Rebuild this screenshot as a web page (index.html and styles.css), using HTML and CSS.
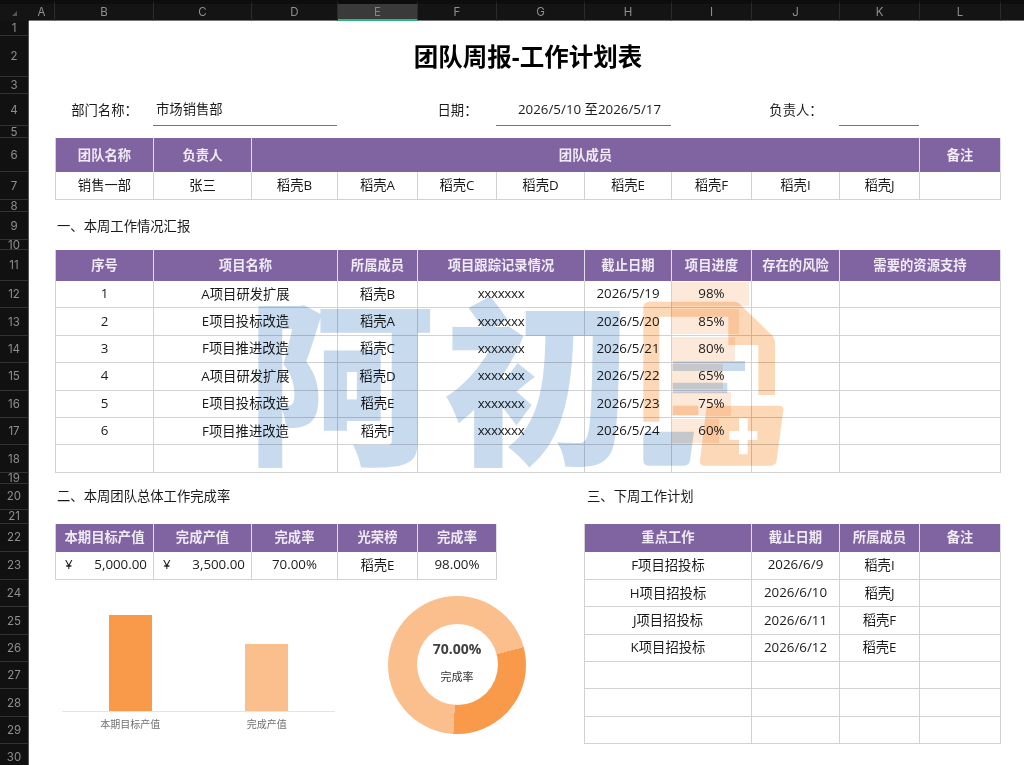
FILE: index.html
```html
<!DOCTYPE html>
<html lang="zh-CN">
<head>
  <meta charset="UTF-8" />
  <title>团队周报-工作计划表</title>
  <link rel="stylesheet" href="styles.css" />
</head>
<body>

<div class="sheet">

  <!-- column letters -->
  <div class="ch corner"><span class="corner-mark"></span></div>
  <div class="ch">A</div><div class="ch">B</div><div class="ch">C</div><div class="ch">D</div>
  <div class="ch active">E</div><div class="ch">F</div><div class="ch">G</div><div class="ch">H</div>
  <div class="ch">I</div><div class="ch">J</div><div class="ch">K</div><div class="ch">L</div><div class="ch"></div>

  <div class="rh">1</div>

  <div class="rh">2</div>
  <div class="title col-b span-11">团队周报-工作计划表</div>

  <div class="rh">3</div>

  <div class="rh">4</div>
  <div class="label col-b">部门名称：</div>
  <div class="field span-2">市场销售部</div>
  <div class="label col-f">日期：</div>
  <div class="field field-date span-2">2026/5/10 至2026/5/17</div>
  <div class="label col-j">负责人：</div>
  <div class="field"></div>

  <div class="rh">5</div>

  <div class="rh">6</div>
  <div class="th col-b first">团队名称</div>
  <div class="th">负责人</div>
  <div class="th span-8">团队成员</div>
  <div class="th">备注</div>

  <div class="rh">7</div>
  <div class="td col-b first">销售一部</div>
  <div class="td">张三</div>
  <div class="td">稻壳B</div>
  <div class="td">稻壳A</div>
  <div class="td">稻壳C</div>
  <div class="td">稻壳D</div>
  <div class="td">稻壳E</div>
  <div class="td">稻壳F</div>
  <div class="td">稻壳I</div>
  <div class="td">稻壳J</div>
  <div class="td"></div>

  <div class="rh">8</div>

  <div class="rh">9</div>
  <div class="section col-b span-4">一、本周工作情况汇报</div>

  <div class="rh">10</div>

  <div class="rh">11</div>
  <div class="th col-b first">序号</div>
  <div class="th span-2">项目名称</div>
  <div class="th">所属成员</div>
  <div class="th span-2">项目跟踪记录情况</div>
  <div class="th">截止日期</div>
  <div class="th">项目进度</div>
  <div class="th">存在的风险</div>
  <div class="th span-2">需要的资源支持</div>

  <div class="rh">12</div>
  <div class="td col-b first">1</div>
  <div class="td span-2">A项目研发扩展</div>
  <div class="td">稻壳B</div>
  <div class="td span-2 mask">xxxxxxx</div>
  <div class="td">2026/5/19</div>
  <div class="td progress"><div class="progress-bar" style="width: 98%"></div><span>98%</span></div>
  <div class="td"></div>
  <div class="td span-2"></div>

  <div class="rh">13</div>
  <div class="td col-b first">2</div>
  <div class="td span-2">E项目投标改造</div>
  <div class="td">稻壳A</div>
  <div class="td span-2 mask">xxxxxxx</div>
  <div class="td">2026/5/20</div>
  <div class="td progress"><div class="progress-bar" style="width: 85%"></div><span>85%</span></div>
  <div class="td"></div>
  <div class="td span-2"></div>

  <div class="rh">14</div>
  <div class="td col-b first">3</div>
  <div class="td span-2">F项目推进改造</div>
  <div class="td">稻壳C</div>
  <div class="td span-2 mask">xxxxxxx</div>
  <div class="td">2026/5/21</div>
  <div class="td progress"><div class="progress-bar" style="width: 80%"></div><span>80%</span></div>
  <div class="td"></div>
  <div class="td span-2"></div>

  <div class="rh">15</div>
  <div class="td col-b first">4</div>
  <div class="td span-2">A项目研发扩展</div>
  <div class="td">稻壳D</div>
  <div class="td span-2 mask">xxxxxxx</div>
  <div class="td">2026/5/22</div>
  <div class="td progress"><div class="progress-bar" style="width: 65%"></div><span>65%</span></div>
  <div class="td"></div>
  <div class="td span-2"></div>

  <div class="rh">16</div>
  <div class="td col-b first">5</div>
  <div class="td span-2">E项目投标改造</div>
  <div class="td">稻壳E</div>
  <div class="td span-2 mask">xxxxxxx</div>
  <div class="td">2026/5/23</div>
  <div class="td progress"><div class="progress-bar" style="width: 75%"></div><span>75%</span></div>
  <div class="td"></div>
  <div class="td span-2"></div>

  <div class="rh">17</div>
  <div class="td col-b first">6</div>
  <div class="td span-2">F项目推进改造</div>
  <div class="td">稻壳F</div>
  <div class="td span-2 mask">xxxxxxx</div>
  <div class="td">2026/5/24</div>
  <div class="td progress"><div class="progress-bar" style="width: 60%"></div><span>60%</span></div>
  <div class="td"></div>
  <div class="td span-2"></div>

  <div class="rh">18</div>
  <div class="td col-b first"></div>
  <div class="td span-2"></div>
  <div class="td"></div>
  <div class="td span-2"></div>
  <div class="td"></div>
  <div class="td"></div>
  <div class="td"></div>
  <div class="td span-2"></div>

  <div class="rh">19</div>

  <div class="rh">20</div>
  <div class="section col-b span-4">二、本周团队总体工作完成率</div>
  <div class="section col-h span-4">三、下周工作计划</div>

  <div class="rh">21</div>

  <div class="rh">22</div>
  <div class="th col-b first">本期目标产值</div>
  <div class="th">完成产值</div>
  <div class="th">完成率</div>
  <div class="th">光荣榜</div>
  <div class="th">完成率</div>
  <div class="th col-h first span-2">重点工作</div>
  <div class="th">截止日期</div>
  <div class="th">所属成员</div>
  <div class="th">备注</div>

  <div class="rh">23</div>
  <div class="td money col-b first"><span>¥</span><span>5,000.00</span></div>
  <div class="td money"><span>¥</span><span>3,500.00</span></div>
  <div class="td">70.00%</div>
  <div class="td">稻壳E</div>
  <div class="td">98.00%</div>
  <div class="td col-h first span-2">F项目招投标</div>
  <div class="td">2026/6/9</div>
  <div class="td">稻壳I</div>
  <div class="td"></div>

  <div class="rh">24</div>
  <div class="td col-h first span-2">H项目招投标</div>
  <div class="td">2026/6/10</div>
  <div class="td">稻壳J</div>
  <div class="td"></div>

  <div class="rh">25</div>
  <div class="td col-h first span-2">J项目招投标</div>
  <div class="td">2026/6/11</div>
  <div class="td">稻壳F</div>
  <div class="td"></div>

  <div class="rh">26</div>
  <div class="td col-h first span-2">K项目招投标</div>
  <div class="td">2026/6/12</div>
  <div class="td">稻壳E</div>
  <div class="td"></div>

  <div class="rh">27</div>
  <div class="td col-h first span-2"></div>
  <div class="td"></div>
  <div class="td"></div>
  <div class="td"></div>

  <div class="rh">28</div>
  <div class="td col-h first span-2"></div>
  <div class="td"></div>
  <div class="td"></div>
  <div class="td"></div>

  <div class="rh">29</div>
  <div class="td col-h first span-2"></div>
  <div class="td"></div>
  <div class="td"></div>
  <div class="td"></div>

  <div class="rh">30</div>

  <!-- charts -->
  <div class="bar-chart">
    <div class="bar-plot">
      <div class="bar-slot"><div class="bar bar-target" style="height: 100%"></div></div>
      <div class="bar-slot"><div class="bar bar-done" style="height: 70%"></div></div>
    </div>
    <div class="bar-labels">
      <div class="bar-label">本期目标产值</div>
      <div class="bar-label">完成产值</div>
    </div>
  </div>

  <div class="donut-wrap">
    <div class="donut">
      <div class="donut-hole">
        <div class="donut-value">70.00%</div>
        <div class="donut-name">完成率</div>
      </div>
    </div>
  </div>

  <!-- watermark -->
  <div class="watermark">
    <div class="wm-text">阿初</div>
    <svg class="wm-logo" viewBox="0 0 540 600" width="180" height="200">
      <path class="wm-orange" d="M70 440V98Q70 80 88 80H345Q353 80 360 88L455 180Q465 190 465 205V360H415V210H325V125H118V440Z" />
      <path class="wm-orange" d="M158 392H235V420H158Z" />
      <path class="wm-orange" fill-rule="evenodd" d="M276 392H478Q492 392 490 406L470 556Q468 572 452 572H254Q238 572 240 556L258 408Q260 392 276 392ZM357 430V468H328V495H357V538H383V495H412V468H383V430Z" />
      <path class="wm-blue" d="M158 258H375V288H158ZM158 323H322V355H158Z" />
      <path class="wm-blue" d="M70 486Q70 470 86 470H222L210 556Q208 572 192 572H86Q70 572 70 556Z" />
    </svg>
  </div>

</div>

</body>
</html>
```

FILE: styles.css
```css
* {
  box-sizing: border-box;
  margin: 0;
  padding: 0;
}

html, body {
  width: 1024px;
  height: 765px;
  overflow: hidden;
  background: #111111;
}

.sheet {
  position: relative;
  display: grid;
  width: 1024px;
  height: 765px;
  overflow: hidden;
  grid-template-columns: 29px 26px 99px 98px 86px 80px 79px 88px 87px 80px 88px 80px 81px 24px;
  grid-template-rows:
    21px 15px 41px 17px 32px 12px 34px 28px 12px 28px 10px 31px
    repeat(7, 27.4px) 11.2px 26px 14px 28px 28px
    repeat(7, 27.4px);
  grid-auto-rows: 27.4px;
  background: #ffffff;
  color: #1a1a1a;
  font-family: "Open Sans", "Noto Sans CJK SC", sans-serif;
  font-size: 13.33px;
}

/* headers */
.ch {
  display: flex;
  align-items: center;
  justify-content: center;
  border-top: 4px solid #0d0d0d;
  border-right: 1px solid #2b2b2b;
  border-bottom: 1px solid #777777;
  background: #141414;
  color: #8f8f8f;
  font-family: "Inter", sans-serif;
  font-size: 11.5px;
}

.ch.corner {
  justify-content: flex-start;
  border-right: none;
  border-bottom-color: #141414;
}

.corner-mark {
  width: 0;
  height: 0;
  margin: 2px 0 0 12px;
  border-left: 5px solid transparent;
  border-bottom: 5px solid #555555;
}

.ch.active {
  border-bottom: 2px solid #2eb57f;
  background: #3a3a3a;
  color: #2eb57f;
}

.rh {
  grid-column: 1;
  display: flex;
  align-items: center;
  justify-content: center;
  border-right: 1px solid #555555;
  border-bottom: 1px solid #333333;
  background: #111111;
  color: #8f8f8f;
  font-family: "Inter", sans-serif;
  font-size: 11.5px;
}

/* placement */
.col-b { grid-column-start: 3; }
.col-f { grid-column-start: 7; }
.col-h { grid-column-start: 9; }
.col-j { grid-column-start: 11; }
.span-2 { grid-column-end: span 2; }
.span-4 { grid-column-end: span 4; }
.span-8 { grid-column-end: span 8; }
.span-11 { grid-column-end: span 11; }

/* text rows */
.title {
  display: flex;
  align-items: center;
  justify-content: center;
  padding-bottom: 2px;
  color: #000000;
  font-size: 24.5px;
  font-weight: 700;
}

.label {
  display: flex;
  align-items: center;
  justify-content: center;
  padding-bottom: 2px;
}

.field {
  display: flex;
  align-items: center;
  margin: 0 1px 0 -1px;
  padding: 0 0 2px 3px;
  border-bottom: 1px solid #777777;
}

.field-date {
  padding-left: 22px;
}

.section {
  display: flex;
  align-items: center;
  padding: 0 0 2px 2px;
  white-space: nowrap;
}

/* tables */
.th,
.td {
  display: flex;
  align-items: center;
  justify-content: center;
  padding-bottom: 2px;
  white-space: nowrap;
}

.th {
  border-right: 1px solid #e3dcea;
  background: #8064a2;
  color: #efeaf4;
  font-weight: 700;
}

.td {
  border-right: 1px solid #d2d2d2;
  border-bottom: 1px solid #d2d2d2;
}

.first {
  border-left: 1px solid #d2d2d2;
}

.col-h.first {
  margin-left: -1px;
}

.mask {
  letter-spacing: -0.3px;
}

.td.money {
  justify-content: space-between;
  padding: 0 6px 2px 9px;
}

.progress {
  position: relative;
}

.progress span {
  position: relative;
}

.progress-bar {
  position: absolute;
  left: 0;
  top: 1px;
  bottom: 1px;
  background: #fde9d9;
}

/* charts */
.bar-chart {
  grid-column: 3 / 6;
  grid-row: 25 / 32;
  display: flex;
  flex-direction: column;
  padding: 35px 0 0 7px;
}

.bar-plot {
  display: flex;
  width: 273px;
  height: 97px;
  border-bottom: 1px solid #e4e4e4;
}

.bar-slot {
  flex: 1;
  display: flex;
  align-items: flex-end;
  justify-content: center;
}

.bar {
  width: 43px;
}

.bar-target {
  background: #f9994a;
}

.bar-done {
  background: #fbbf8e;
}

.bar-labels {
  display: flex;
  width: 273px;
  margin-top: 4px;
}

.bar-label {
  flex: 1;
  color: #6f6f6f;
  font-size: 10px;
  text-align: center;
}

.donut-wrap {
  grid-column: 6 / 9;
  grid-row: 25 / 32;
  display: flex;
  justify-content: center;
  align-items: flex-start;
  padding: 16px 9px 0 0;
}

.donut {
  display: flex;
  align-items: center;
  justify-content: center;
  width: 138px;
  height: 138px;
  border-radius: 50%;
  background: conic-gradient(from 75deg, #f9994a 0 30%, #fbbf8e 30% 100%);
}

.donut-hole {
  display: flex;
  flex-direction: column;
  align-items: center;
  justify-content: center;
  gap: 14px;
  width: 81px;
  height: 81px;
  padding-bottom: 4px;
  border-radius: 50%;
  background: #ffffff;
}

.donut-value {
  color: #404040;
  font-size: 14px;
  font-weight: 700;
  line-height: 14px;
}

.donut-name {
  color: #333333;
  font-size: 11px;
  line-height: 14px;
}

/* watermark sits over the sheet and multiplies */
.watermark {
  position: absolute;
  inset: 0;
  mix-blend-mode: multiply;
  pointer-events: none;
}

.wm-text {
  position: absolute;
  left: 246px;
  top: 274px;
  color: #c8daee;
  font-family: "Noto Sans CJK SC", sans-serif;
  font-size: 178px;
  font-weight: 900;
  line-height: 200px;
  letter-spacing: 8px;
  white-space: nowrap;
  transform: scaleX(1.06);
  transform-origin: left center;
}

.wm-logo {
  position: absolute;
  left: 620px;
  top: 275px;
}

.wm-orange {
  fill: #fcd8b6;
}

.wm-blue {
  fill: #c8daee;
}
```
